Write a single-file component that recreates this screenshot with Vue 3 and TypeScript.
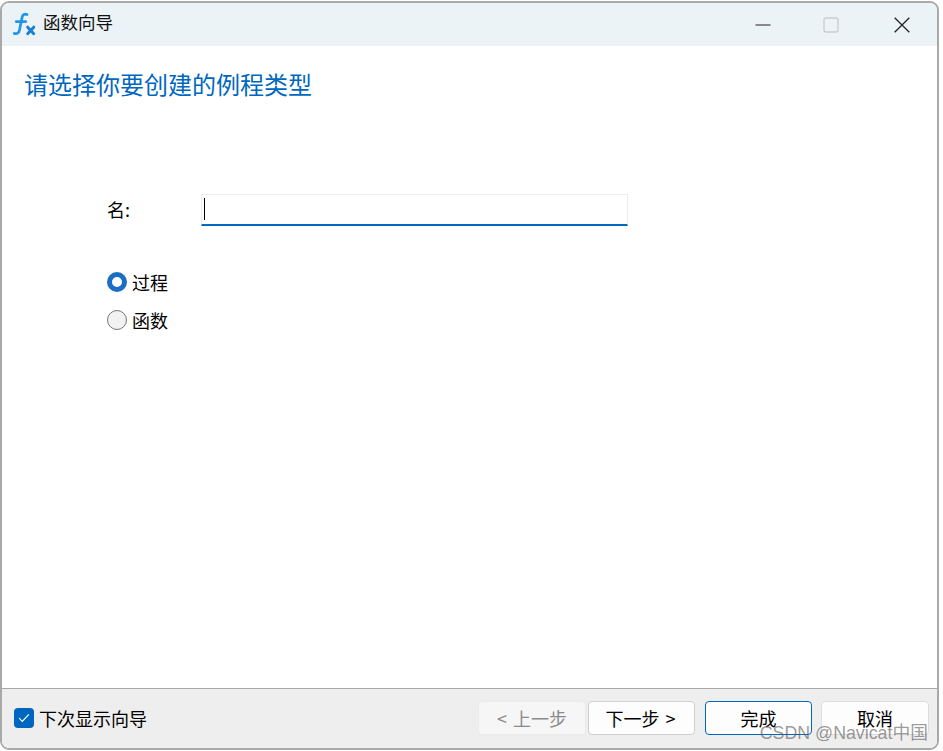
<script setup lang="ts">
const heading = '请选择你要创建的例程类型'
</script>

<template>
  <div class="page">
    <div class="window">
      <header class="titlebar">
        <svg class="logo" width="26" height="26" viewBox="0 0 24 24" fill="none">
          <path d="M14.800 2.300c-2.200-.8-4 .1-4.500 2.400L7.800 16.800c-.5 2.500-2.200 3.800-4.800 3" stroke="#2196e8" stroke-width="2.500" stroke-linecap="round"/>
          <path d="M4.800 8.800h8.800" stroke="#2196e8" stroke-width="2.500" stroke-linecap="round"/>
          <path d="M15.400 14l5.600 6M21 14l-5.600 6" stroke="#1a7fd6" stroke-width="2.700" stroke-linecap="round"/>
        </svg>
        <span class="title">函数向导</span>
        <div class="caption">
          <svg class="cap min" width="16" height="16" viewBox="0 0 16 16"><path d="M0.500 8h15" stroke="#222" stroke-width="1.200"/></svg>
          <svg class="cap max" width="16" height="16" viewBox="0 0 16 16"><rect x="1" y="1" width="14" height="14" rx="2" fill="none" stroke="#c9cdd0" stroke-width="1.400"/></svg>
          <svg class="cap close" width="16" height="16" viewBox="0 0 16 16"><path d="M.7.700l14.600 14.600M15.300.700L.7 15.300" stroke="#222" stroke-width="1.300"/></svg>
        </div>
      </header>

      <main class="content">
        <h1 class="heading">{{ heading }}</h1>
        <div class="form">
          <div class="name-row">
            <label class="name-label">名:</label>
            <div class="input"><span class="text-caret"></span></div>
          </div>
          <div class="radios">
            <div class="radio-row"><span class="radio on"></span><span class="text">过程</span></div>
            <div class="radio-row"><span class="radio"></span><span class="text">函数</span></div>
          </div>
        </div>
      </main>

      <footer class="footer">
        <div class="check-row">
          <span class="check">
            <svg width="12" height="10" viewBox="0 0 12 10" fill="none"><path d="M1.200 5.200l3.100 3.100 6.500-7" stroke="#fff" stroke-width="1.200"/></svg>
          </span>
          <span class="text">下次显示向导</span>
        </div>
        <div class="buttons">
          <button class="btn disabled" type="button">&lt; 上一步</button>
          <button class="btn next" type="button">下一步 &gt;</button>
          <button class="btn primary" type="button">完成</button>
          <button class="btn cancel" type="button">取消</button>
        </div>
      </footer>

      <div class="watermark">CSDN @Navicat中国</div>
    </div>
  </div>
</template>

<style scoped>
.page {
  width: 943px;
  height: 751px;
  background: #fff;
  padding: 1px 4px 1px 0;
  box-sizing: border-box;
  font-family: "Noto Sans CJK SC", "Liberation Sans", sans-serif;
  color: #000;
  overflow: hidden;
}
.window {
  position: relative;
  height: 749px;
  box-sizing: border-box;
  border: 2px solid #a9a9a9;
  border-radius: 9px;
  display: flex;
  flex-direction: column;
  overflow: hidden;
  background: #fff;
}
.titlebar {
  height: 43px;
  flex: none;
  background: #ecf3f7;
  display: flex;
  align-items: center;
  padding-left: 9px;
}
.logo { flex: none; }
.title {
  margin-left: 6px;
  padding-bottom: 6px;
  font-size: 17.500px;
  line-height: 24px;
  color: #111;
}
.caption {
  margin-left: auto;
  display: flex;
  align-items: center;
  padding-right: 27px;
}
.cap { display: block; }
.cap.min { margin-right: 52px; }
.cap.close { margin-left: 55px; }
.content { flex: 1; min-height: 0; }
.heading {
  margin: 21px 0 0 22px;
  font-size: 24px;
  line-height: 34px;
  font-weight: 400;
  color: #0067c0;
}
.form { margin: 93px 0 0 105px; }
.name-row { display: flex; align-items: flex-start; }
.name-label {
  width: 94px;
  font-size: 18px;
  line-height: 30px;
}
.input {
  width: 427px;
  height: 32px;
  box-sizing: border-box;
  background: #fff;
  border: 1px solid #ececec;
  border-bottom: 2px solid #0067c0;
  padding: 3px 0 0 2px;
}
.text-caret {
  display: block;
  width: 1px;
  height: 22px;
  background: #000;
}
.radios {
  margin-top: 42px;
  display: flex;
  flex-direction: column;
  gap: 10px;
}
.radio-row {
  display: flex;
  align-items: center;
  height: 28px;
  gap: 5px;
}
.radio {
  width: 20px;
  height: 20px;
  box-sizing: border-box;
  border-radius: 50%;
  background: #f2f2f2;
  border: 1px solid #767676;
}
.radio.on {
  background: #fff;
  border: 5px solid #1b6fc2;
}
.text {
  font-size: 18px;
  line-height: 26px;
}
.footer {
  height: 60px;
  flex: none;
  box-sizing: border-box;
  background: #eeeeee;
  border-top: 1px solid #a8a8a8;
  display: flex;
  align-items: center;
  justify-content: space-between;
  padding: 0 8px 2px 12px;
}
.check-row { display: flex; align-items: center; gap: 5px; }
.check {
  width: 20px;
  height: 20px;
  border-radius: 4px;
  background: #0067c0;
  display: flex;
  align-items: center;
  justify-content: center;
}
.buttons { display: flex; align-items: center; }
.btn {
  height: 34px;
  box-sizing: border-box;
  border-radius: 4px;
  border: 1px solid #cfcfcf;
  background: #fdfdfd;
  font-family: inherit;
  font-size: 18px;
  line-height: 1;
  word-spacing: 2px;
  color: #000;
  padding: 0;
}
.btn.disabled {
  width: 108px;
  background: #f6f6f6;
  border-color: #ebebeb;
  color: #8a8a8a;
}
.btn.next { width: 107px; margin-left: 2px; padding-right: 2px; }
.btn.primary {
  width: 107px;
  margin-left: 10px;
  border-color: #0067c0;
}
.btn.cancel {
  width: 108px;
  margin-left: 9px;
  border-color: #dddddd;
}
.watermark {
  position: absolute;
  right: 9px;
  bottom: 4px;
  font-family: "Liberation Sans", "Noto Sans CJK SC", sans-serif;
  font-size: 17.800px;
  line-height: 22px;
  color: rgba(90, 90, 90, 0.62);
  white-space: nowrap;
}
</style>
